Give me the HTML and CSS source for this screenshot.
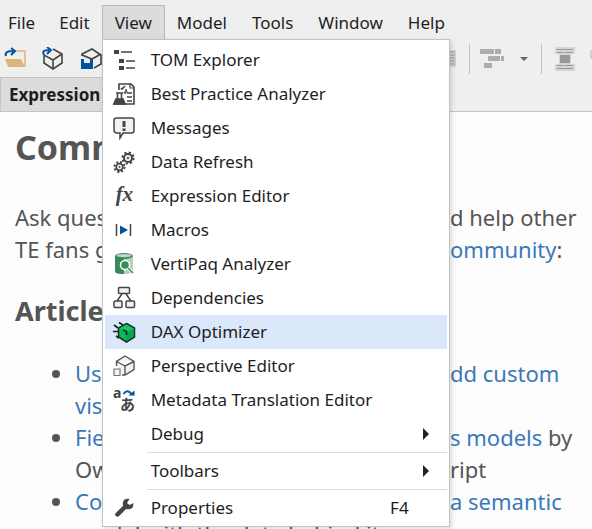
FILE: index.html
```html
<!DOCTYPE html>
<html lang="en">
<head>
<meta charset="utf-8">
<title>Expression Editor</title>
<link rel="stylesheet" href="styles.css">
</head>
<body>
<nav class="menubar" aria-label="Main menu">
  <button>File</button><button>Edit</button>
  <div class="open">
    <button class="current" aria-expanded="true">View</button>
    <div class="menu" role="menu">
      <button class="item" role="menuitem"><svg viewBox="0 0 24 24"><path d="M2 2h5v4H2zM7 11h5v4H7zM7 18h5v4H7z" fill="#444"/><path d="M9 4h11M14 13h9M14 20h9" stroke="#444" stroke-width="1.6"/></svg><span>TOM Explorer</span></button>
      <button class="item" role="menuitem"><svg viewBox="0 0 24 24" fill="none" stroke="#444" stroke-width="1.6"><path d="M7 8V2h12l3 3v17H12"/><path d="M18 2v4h4" stroke-width="1.2"/><path d="M9 6l1 1 3-3M15 8h-2M15 11h5M15 15h5M15 19h5M12 10l1 1 2-2"/><path d="M4 11h7M5.500 11v5L2 22h11l-3.500-6v-5"/><path d="M4 17h7l2 5H2z" fill="#444"/></svg><span>Best Practice Analyzer</span></button>
      <button class="item" role="menuitem"><svg viewBox="0 0 24 24"><path d="M5 2h15q2 0 2 2v10q0 3-2 3h-9l-3 5v-5H5q-3 0-3-3V4q0-2 3-2z" fill="#f1f1f6" stroke="#444" stroke-width="1.500"/><path d="M10.500 5h3v6h-3zM10.500 12.500h3v2.500h-3z" fill="#444"/></svg><span>Messages</span></button>
      <button class="item" role="menuitem"><svg viewBox="0 0 24 24" fill="none" stroke="#444"><circle cx="16" cy="8" r="4" stroke-width="2"/><circle cx="16" cy="8" r="5.600" stroke-width="2" stroke-dasharray="2.200 2.200"/><circle cx="16" cy="8" r="1"/><circle cx="7.500" cy="17" r="3.300" stroke-width="1.700"/><circle cx="7.500" cy="17" r="5" stroke-width="2" stroke-dasharray="2 1.930"/><circle cx="7.500" cy="17" r=".7"/></svg><span>Data Refresh</span></button>
      <button class="item" role="menuitem"><i class="fx">fx</i><span>Expression Editor</span></button>
      <button class="item" role="menuitem"><svg viewBox="0 0 24 24"><path d="M4.500 6v12M18.500 6v12" stroke="#444" stroke-width="1.500"/><path d="M8 7.500l8 4.500-8 4.500z" fill="#00539c"/></svg><span>Macros</span></button>
      <button class="item" role="menuitem"><svg viewBox="0 0 24 24"><path d="M3 4v16q1 2 9 2V4z" fill="#388a56"/><path d="M12 4v18q8 0 9-2V4z" fill="#b6d2bf"/><ellipse cx="12" cy="4" rx="9" ry="3" fill="#388a56"/><ellipse cx="12" cy="3.600" rx="7.500" ry="1.700" fill="#bdd8c6"/><circle cx="13" cy="13" r="4.500" fill="#388a56" stroke="#fff" stroke-width="1.500"/><path d="M16 16l5 5" stroke="#fff" stroke-width="3"/><path d="M16 16l5 5" stroke="#388a56" stroke-width="1.500"/></svg><span>VertiPaq Analyzer</span></button>
      <button class="item" role="menuitem"><svg viewBox="0 0 24 24" fill="#f2f2f5" stroke="#444" stroke-width="1.500"><path d="M10 8l-5 7M14 8l5 7" fill="none"/><rect x="6.500" y="1.500" width="11" height="6" rx="1"/><rect x="2" y="15" width="8" height="6.500" rx="1"/><rect x="14" y="15" width="8.500" height="6.500" rx="1"/></svg><span>Dependencies</span></button>
      <button class="item active" role="menuitem"><svg viewBox="0 0 24 24"><path d="M14.500 3.500l8 4.500v9l-8 5-8-5V8z" fill="#0bb75c" stroke="#153325" stroke-width="1.500"/><path d="M7.500 8.500l7 4 7-4-7-4z" fill="#16c56a"/><path d="M14.500 13v8l7-4.500V9z" fill="#08a550"/><path d="M11 10l3.500 1.500V15M2 5l4 3M7 2.500l4 2.500M1 11.500h5M4 16l3 2" fill="none" stroke="#10291d" stroke-width="1.700"/></svg><span>DAX Optimizer</span></button>
      <button class="item" role="menuitem"><svg viewBox="0 0 24 24" fill="none" stroke="#555" stroke-width="1.400"><path d="M4.500 12V7.500L13 2l9 5.500v8L13 21h-3M4.500 7.500L13 12l9-4.500M13 12v9" fill="#f3f3f5"/><path d="M2 15h6v6.500H2z" fill="#f3f3f5" stroke="#777" stroke-width="1.200"/></svg><span>Perspective Editor</span></button>
      <button class="item" role="menuitem"><svg viewBox="0 0 24 24"><text x="1" y="10" class="latin">a</text><text x="8" y="22" class="kana">あ</text><path d="M11.500 6q4-6 9 1" fill="none" stroke="#00539c" stroke-width="1.800"/><path d="M16.500 7.500h6V2.500z" fill="#00539c"/></svg><span>Metadata Translation Editor</span></button>
      <button class="item" role="menuitem"><i></i><span>Debug</span><b class="arrow"></b></button>
      <hr>
      <button class="item" role="menuitem"><i></i><span>Toolbars</span><b class="arrow"></b></button>
      <hr>
      <button class="item" role="menuitem"><svg viewBox="0 0 24 24"><path d="M5.500 18.500l8-8" stroke="#444" stroke-width="4.500" stroke-linecap="round"/><path d="M17.500 3q-5-1-6.500 3-1 5 3 7 5 1 7-2l.5-4-4 2-2.500-2z" fill="#444"/></svg><span>Properties</span><kbd>F4</kbd></button>
    </div>
  </div>
  <button>Model</button><button>Tools</button><button>Window</button><button>Help</button>
</nav>
<div class="toolbar">
  <div class="tools">
    <button aria-label="Open file"><svg viewBox="0 0 24 24"><path d="M12 4h10v16" fill="none" stroke="#dcb679" stroke-width="1.500"/><path d="M2 12h16l4 8H5z" fill="#dcb679"/><path d="M3 9q-2-5 7-5M8 1l4 3-4 4" fill="none" stroke="#00539c" stroke-width="2"/></svg></button>
    <button aria-label="Open model"><svg viewBox="0 0 24 24" fill="none" stroke="#444" stroke-width="1.600"><path d="M12 2l9 5v9l-9 6-9-6V8l9 5 9-6M12 13v9"/><path d="M3 8q-3-5 5-5M6 0l4 3-4 4" stroke="#00539c" stroke-width="2"/></svg></button>
    <button aria-label="Save model"><svg viewBox="0 0 24 24" fill="none" stroke="#444" stroke-width="1.600"><path d="M3 9V7l10-5 9 6v9l-7 4M3 8l10 4 9-5M13 12v2"/><path d="M2 12h12v10H2z" fill="#00539c" stroke="none"/><path d="M5 12h6v4H5z" fill="#eee" stroke="none"/></svg></button>
  </div>
  <div class="tools right">
    <svg class="lines" viewBox="0 0 6 24"><path d="M0 3h6v17H0z" fill="#d5d5d5"/><path d="M0 5h5M0 8h5M0 11h5M0 14h5M0 17h5" stroke="#999"/></svg>
    <span class="divider first"></span>
    <button aria-label="Align"><svg viewBox="0 0 24 24" fill="#adadad"><path d="M0 2h14v5H0zM15 2h6v5h-6zM8 9h12v5H8zM21 9h3v5h-3zM4 16h8v5H4z"/></svg></button>
    <span class="caret"></span>
    <span class="divider"></span>
    <button aria-label="Spacing"><svg viewBox="0 0 24 24"><path d="M2 0h20v7H2zM2 17h20v7H2zM6 7h12v10H6z" fill="#d5d5d5"/><path d="M4 2.500h16M4 5.500h7M12 5.500h8M4 18.500h7M12 18.500h8M4 21.500h16" stroke="#999"/><path d="M7 8h10v8H7z" fill="#999"/></svg></button>
    <svg class="edge" viewBox="0 0 2 24"><path d="M0 3h2v9H0z" fill="#d0d0d0"/></svg>
  </div>
</div>
<div class="tabs"><button class="tab">Expression Editor</button></div>
<main>
  <h1>Community</h1>
  <p><span class="line"><span>Ask questions</span><span>d help other</span></span>
  <span class="line"><span>TE fans get</span><span><a href="#">ommunity</a>:</span></span></p>
  <h2>Articles</h2>
  <ul>
    <li><span class="line"><a href="#">Using</a><a href="#">dd custom</a></span><span class="line"><a href="#">visuals</a></span></li>
    <li><span class="line"><a href="#">Field</a><span><a href="#">s models</a> by</span></span><span class="line"><span>Owen</span><span>ript</span></span></li>
    <li><span class="line"><a href="#">Connect</a><a href="#">a semantic</a></span><span class="line"><span>model with the data behind it</span></span></li>
  </ul>
</main>
</body>
</html>
```
FILE: styles.css
```css
* { box-sizing: border-box; }
body { margin: 0; height: 100vh; overflow: hidden; background: #fdfdfd; color: #1e1e1e; font: 17px/24px "Noto Sans", sans-serif; }
button { border: 0; padding: 0; margin: 0; background: none; color: inherit; font: inherit; text-align: left; }
svg { display: block; width: 24px; height: 24px; }
.menubar { display: flex; height: 40px; padding-top: 5px; background: #efefef; }
.menubar > button, .current { height: 35px; padding: 0 12px; }
.menubar > button:first-child { padding-left: 8px; }
.menubar > .open ~ button { padding: 0 13px 0 12px; }
.open { position: relative; }
.current { background: #dcdcdc; border: 1px solid #b8b8b8; }
.menu { position: absolute; z-index: 2; top: 34px; left: 0; width: 348px; padding: 3px 2px 1px; background: #fff; border: 1px solid #c2c2c2; box-shadow: 2px 2px 5px #0002; }
.item { display: flex; align-items: center; width: 100%; height: 34px; padding: 0 18px 0 7px; }
.item > svg, .item > i { flex: none; width: 24px; height: 24px; margin-right: 15px; }
.item > span { flex: 1; white-space: nowrap; }
.active { background: #dbe7fb; }
.fx { padding-left: 4px; font: italic bold 21px/20px "Liberation Serif", serif; color: #444; }
.latin { font: bold 14px "Noto Sans", sans-serif; fill: #444; }
.kana { font: bold 15px "Noto Sans CJK JP", sans-serif; fill: #444; }
.arrow { border-left: 6px solid #222; border-top: 6px solid transparent; border-bottom: 6px solid transparent; }
.menu hr { height: 1px; margin: 1px 0 1px 42px; border: 0; background: #ddd; }
kbd { font: inherit; margin-right: 20px; }
.toolbar { display: flex; justify-content: space-between; height: 37px; background: #efefef; }
.tools { display: flex; align-items: center; gap: 14px; padding-left: 3px; }
.right { gap: 0; padding-left: 0; }
.lines { width: 6px; }
.divider { width: 1px; height: 30px; margin: 0 11px 0 13px; background: #c4c4c4; }
.first { margin-right: 10px; }
.caret { margin-left: 16px; border-top: 4px solid #666; border-left: 4px solid transparent; border-right: 4px solid transparent; }
.edge { width: 2px; margin-left: 13px; }
.tabs { height: 35px; background: #efefef; border-bottom: 1px solid #c4c4c4; }
.tab { height: 35px; padding: 0 8px; background: #dcdcdc; border: 1px solid #c4c4c4; font-size: 17px; font-weight: bold; }
main { padding: 13px 0 0 15px; color: #555; font-size: 22px; line-height: 32px; }
h1 { margin: 0; font-size: 34px; line-height: 44px; }
p { margin: 32px 0 0; }
h2 { margin: 28px 0 0; font-size: 27px; line-height: 36px; }
ul { margin: 28px 0 0; padding-left: 60px; }
a { color: #3b79ba; text-decoration: none; }
.line { display: grid; grid-template-columns: 435px 1fr; white-space: nowrap; }
ul .line { grid-template-columns: 375px 1fr; }
```
